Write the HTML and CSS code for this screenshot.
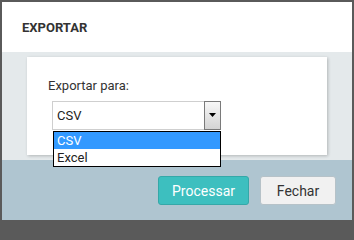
FILE: index.html
```html
<!DOCTYPE html>
<html lang="pt">
<head>
<meta charset="utf-8">
<title>Exportar</title>
<link rel="stylesheet" href="styles.css">
</head>
<body>
<div class="dialog">
  <div class="dialog-header"><h1 class="dialog-title">EXPORTAR</h1></div>
  <div class="dialog-body">
    <div class="card">
      <label class="field-label">Exportar para:</label>
      <div class="select-wrap">
        <div class="select">
          <span class="select-value">CSV</span>
          <span class="select-button">
            <svg width="8" height="5" viewBox="0 0 8 5"><polygon points="0,0 7,0 3.5,4" fill="#000"/></svg>
          </span>
        </div>
        <ul class="select-list">
          <li class="option option-selected">CSV</li>
          <li class="option">Excel</li>
        </ul>
      </div>
    </div>
  </div>
  <div class="dialog-footer">
    <button class="btn btn-primary">Processar</button>
    <button class="btn btn-default">Fechar</button>
  </div>
</div>
</body>
</html>
```

FILE: styles.css
```css
* { box-sizing: border-box; }
html, body {
  margin: 0;
  padding: 0;
  width: 354px;
  height: 223px;
  overflow: hidden;
}
body {
  font-family: Roboto, "Liberation Sans", Arial, sans-serif;
  color: #333;
  background: #5a5a5a;
}
.dialog {
  width: 354px;
  height: 223px;
  border: 2px solid #5a5a5a;
  border-bottom-width: 3px;
  display: flex;
  flex-direction: column;
  background: #fff;
}
.dialog-header {
  height: 50px;
  display: flex;
  align-items: center;
  padding-left: 20px;
  background: #fff;
}
.dialog-title {
  margin: 0;
  font-size: 13px;
  font-weight: bold;
  color: #333;
  padding-top: 1px;
}
.dialog-body {
  height: 108px;
  background: #e4e9eb;
  padding: 5px 25px;
}
.card {
  height: 98px;
  background: #fff;
  box-shadow: 1px 1px 3px rgba(0, 0, 0, 0.22);
  padding: 21px 21px 0 21px;
}
.field-label {
  display: block;
  font-size: 13px;
  line-height: 15px;
  color: #333;
}
.select-wrap {
  position: relative;
  margin: 8px 0 0 4px;
  width: 169px;
}
.select {
  height: 29px;
  border: 1px solid #cfcfcf;
  border-right: none;
  display: flex;
  align-items: center;
  background: #fff;
}
.select-value {
  flex: 1;
  padding-left: 4px;
  font-size: 13px;
  color: #222;
}
.select-button {
  width: 17px;
  height: 29px;
  margin-top: -1px;
  margin-bottom: -1px;
  border: 1px solid #7a7a7a;
  background: linear-gradient(#f7f7f7, #d4d4d4);
  display: flex;
  align-items: center;
  justify-content: center;
}
.select-list {
  position: absolute;
  top: 30px;
  left: 1px;
  width: 168px;
  margin: 0;
  padding: 0;
  list-style: none;
  border: 1px solid #000;
  background: #fff;
}
.option {
  height: 17px;
  line-height: 17px;
  padding-left: 3px;
  font-size: 13px;
  color: #222;
}
.option-selected {
  background: #3399ff;
  color: #fff;
}
.dialog-footer {
  flex: 1;
  background: #afc5d0;
  display: flex;
  justify-content: flex-end;
  align-items: flex-start;
  gap: 11px;
  padding: 16px 16px 0 0;
}
.btn {
  height: 29px;
  border-radius: 3px;
  font-family: Roboto, "Liberation Sans", Arial, sans-serif;
  font-size: 14px;
  padding: 0;
  cursor: pointer;
}
.btn-primary {
  width: 91px;
  background: #3dbfbf;
  border: 1px solid #35a8a8;
  color: #fff;
}
.btn-default {
  width: 76px;
  background: #f1f1f1;
  border: 1px solid #b6c2c8;
  color: #333;
}
```
